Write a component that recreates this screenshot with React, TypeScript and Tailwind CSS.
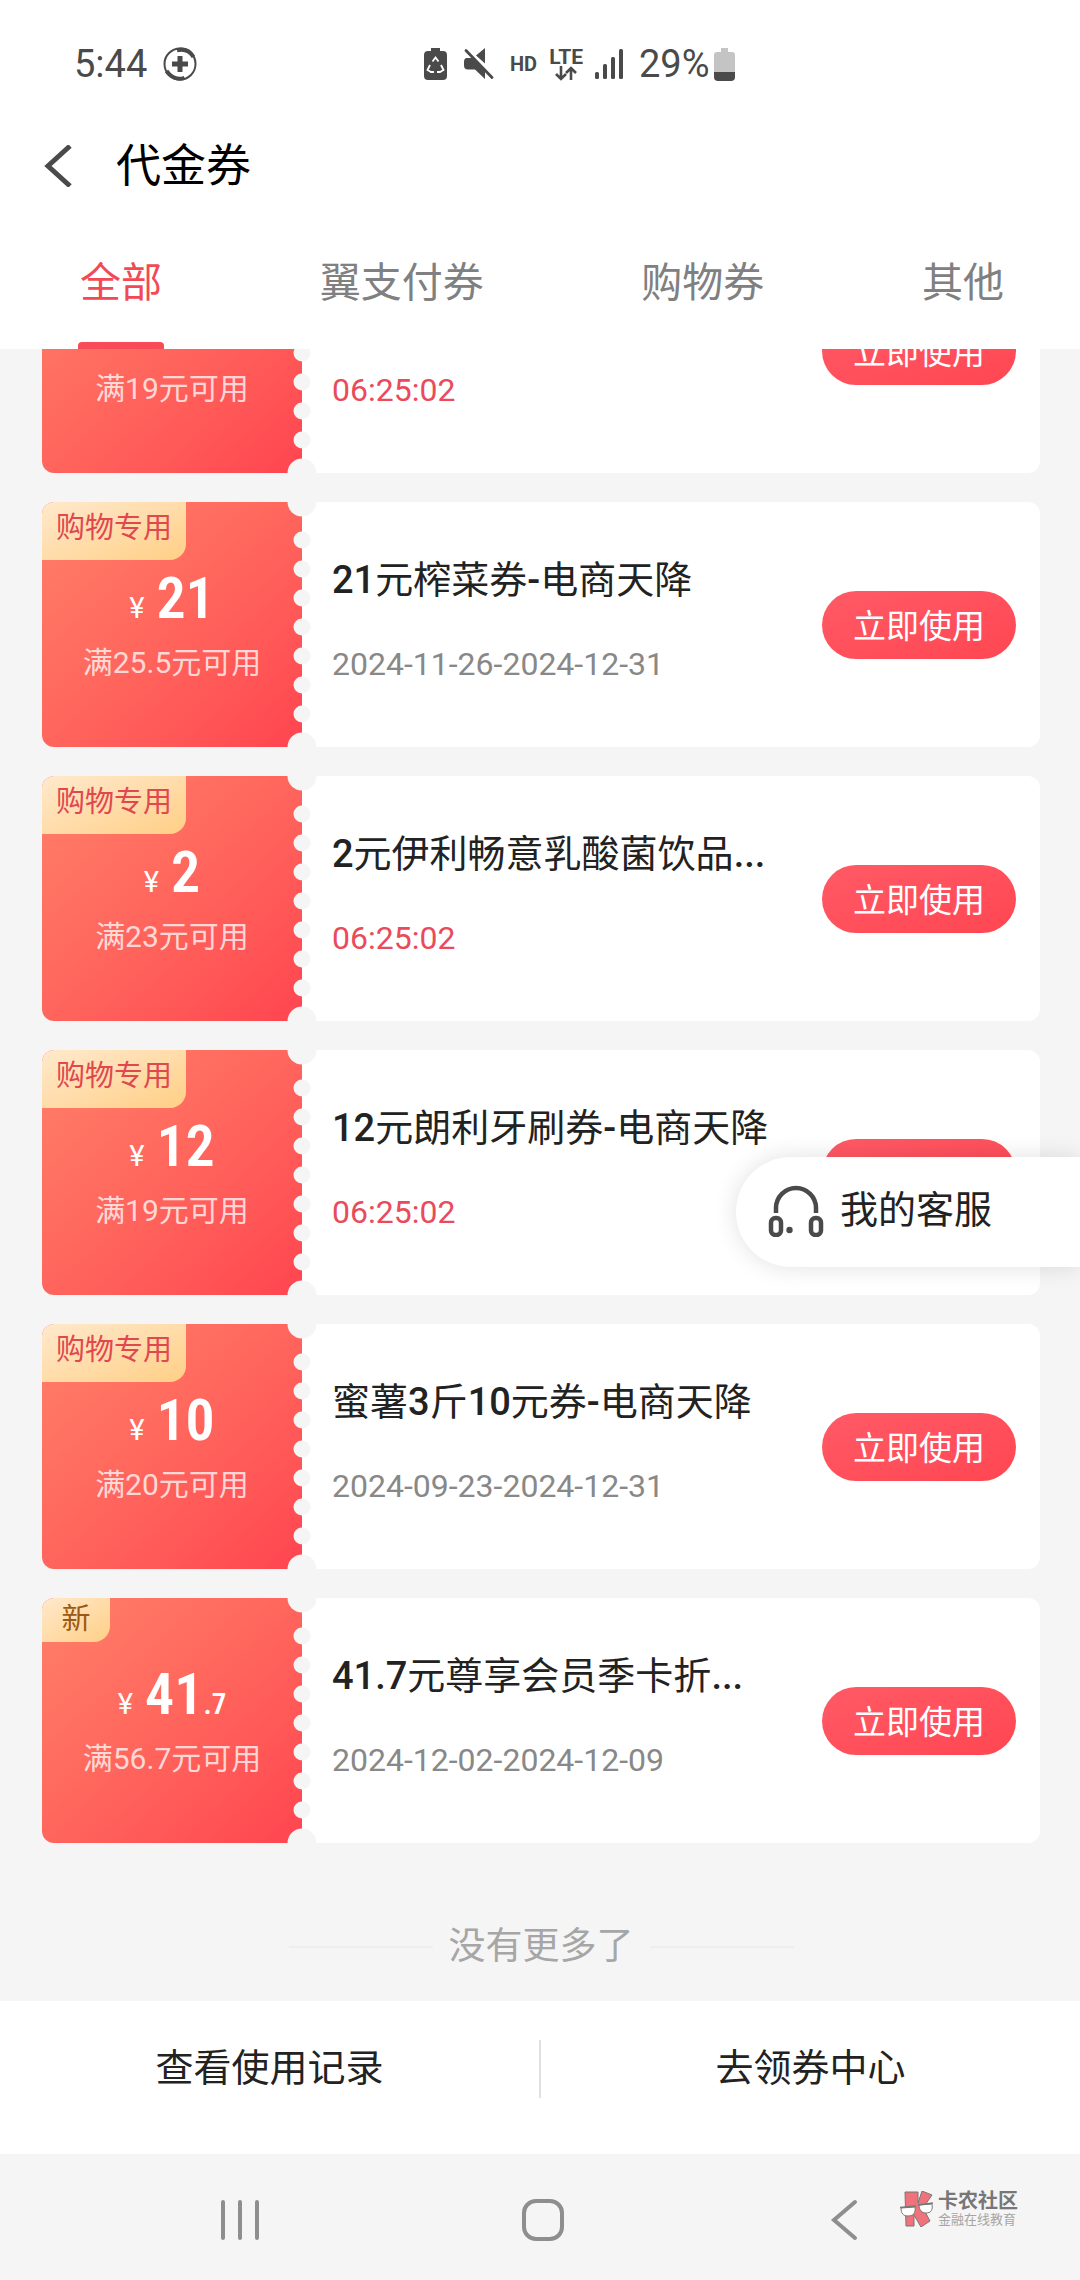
import { ReactNode } from 'react'

type Coupon = {
  badge?: 'shop' | 'new'
  amount?: string
  decimals?: string
  condition: string
  title?: string
  validity: string
  countdown?: boolean
}

const TABS = ['全部', '翼支付券', '购物券', '其他']

const COUPONS: Coupon[] = [
  // scrolled half out of view, only the lower part is rendered
  { condition: '满19元可用', validity: '06:25:02', countdown: true },
  { badge: 'shop', amount: '21', condition: '满25.5元可用', title: '21元榨菜券-电商天降', validity: '2024-11-26-2024-12-31' },
  { badge: 'shop', amount: '2', condition: '满23元可用', title: '2元伊利畅意乳酸菌饮品...', validity: '06:25:02', countdown: true },
  { badge: 'shop', amount: '12', condition: '满19元可用', title: '12元朗利牙刷券-电商天降', validity: '06:25:02', countdown: true },
  { badge: 'shop', amount: '10', condition: '满20元可用', title: '蜜薯3斤10元券-电商天降', validity: '2024-09-23-2024-12-31' },
  { badge: 'new', amount: '41', decimals: '.7', condition: '满56.7元可用', title: '41.7元尊享会员季卡折...', validity: '2024-12-02-2024-12-09' },
]

// y positions of the small holes along the tear line
const HOLES = [38, 67, 96, 125, 154, 183, 212]

function StatusBar() {
  return (
    <div className="flex h-[126px] items-center pt-0.5 pl-[74px] text-[38px] leading-none text-[#4a4a4a]">
      <div className="flex w-[350px] items-center gap-4">
        <span>5:44</span>
        <svg className="h-[34px] w-[34px]" viewBox="0 0 34 34" fill="none" stroke="currentColor">
          <circle cx="17" cy="17" r="15.5" strokeWidth="2" />
          <path d="M14 3.2C21 1.500 27 4 30.500 10M3.500 24c5 7 12 9 18 6.800" strokeWidth="4" />
          <path d="M17 9v16M9 17h16" strokeWidth="5" />
        </svg>
      </div>
      <div className="flex items-center">
        <svg className="h-8 w-[23px]" viewBox="0 0 23 32">
          <path d="M7 0h9v3h3a4 4 0 0 1 4 4v21a4 4 0 0 1-4 4H4a4 4 0 0 1-4-4V7a4 4 0 0 1 4-4h3z" fill="currentColor" />
          <path d="M8.500 13.500 11.500 9.500l3 4M17 17l2.500 5-3.500 2h-3M10 24H7l-3.500-2L6 17" fill="none" stroke="#fff" strokeWidth="1.800" />
        </svg>
        <svg className="ml-4 h-8 w-[31px]" viewBox="0 0 31 32">
          <path d="M13 7.500 22 0v15.500zM3 10h6l13 12.500V31L12 21.500H5a4 4 0 0 1-4-4v-4a3.500 3.500 0 0 1 2-3.500z" fill="currentColor" />
          <path d="m6 2.500 26 27" stroke="#fff" strokeWidth="2" />
          <path d="m3 2.500 26 27" stroke="currentColor" strokeWidth="2.800" strokeLinecap="round" />
        </svg>
        <span className="ml-4 text-xl font-bold">HD</span>
        <span className="ml-3 flex flex-col items-center">
          <span className="text-[21px] leading-[18px] font-bold">LTE</span>
          <svg className="h-[15px] w-6" viewBox="0 0 24 15" fill="none" stroke="currentColor" strokeWidth="2.600">
            <path d="M7 0v12M2 8l5 5 5-5M17 14V2M12 7l5-5 5 5" />
          </svg>
        </span>
        <svg className="ml-3 h-[30px] w-7" viewBox="0 0 28 30" fill="currentColor">
          <rect x="0" y="23" width="4" height="7" rx="1.500" />
          <rect x="8" y="15" width="4" height="15" rx="1.500" />
          <rect x="16" y="8" width="4" height="22" rx="1.500" />
          <rect x="24" y="0" width="4" height="30" rx="1.500" />
        </svg>
        <span className="ml-4">29%</span>
        <svg className="ml-1 h-[33px] w-[21px]" viewBox="0 0 21 33">
          <path d="M7 0h7v4h4a3 3 0 0 1 3 3v17H0V7a3 3 0 0 1 3-3h4z" fill="#c4c4c4" />
          <path d="M0 24h21v5a4 4 0 0 1-4 4H4a4 4 0 0 1-4-4z" fill="currentColor" />
        </svg>
      </div>
    </div>
  )
}

function Badge({ type }: { type: 'shop' | 'new' }) {
  if (type === 'new') {
    return (
      <span className="absolute top-0 left-0 flex h-11 w-[68px] justify-center rounded-tl-xl rounded-br-2xl bg-linear-to-br from-[#ffe9cc] to-[#ffcf85] text-[29px] leading-[42px] text-[#9a5a14]">
        新
      </span>
    )
  }
  return (
    <span className="absolute top-0 left-0 flex h-[58px] w-36 justify-center rounded-tl-xl rounded-br-2xl bg-linear-to-br from-[#ffe9cc] to-[#ffcf85] text-[29px] leading-[52px] text-[#e0474f]">
      购物专用
    </span>
  )
}

function TearLine() {
  return (
    <svg className="absolute top-0 left-[245px] h-[245px] w-[30px]" viewBox="0 0 30 245" fill="#f5f5f5" aria-hidden="true">
      <circle cx="15" cy="0" r="14.500" />
      {HOLES.map((y) => (
        <circle key={y} cx="15" cy={y} r="8.500" />
      ))}
      <circle cx="15" cy="245" r="14.500" />
    </svg>
  )
}

// Latin runs are medium weight, Chinese runs stay regular
function CouponTitle({ text }: { text: string }) {
  return (
    <>
      {text.split(/([\d.-]+)/).map((part, i) =>
        i % 2 === 1 ? (
          <span key={i} className="font-medium">
            {part}
          </span>
        ) : (
          part
        )
      )}
    </>
  )
}

function CouponCard({ coupon }: { coupon: Coupon }) {
  return (
    <li className="relative flex min-h-[245px] overflow-hidden rounded-xl bg-white">
      <div className="flex w-[260px] shrink-0 flex-col items-center bg-linear-to-br from-[#ff8069] to-[#ff4450] pt-[70px] text-white">
        {coupon.badge && <Badge type={coupon.badge} />}
        <p className="flex h-[52px] items-baseline leading-[52px]">
          {coupon.amount && (
            <>
              <span className="mr-3 text-[29px]">¥</span>
              <span className="font-['Roboto_Condensed','Roboto',sans-serif] text-[58px] font-semibold">{coupon.amount}</span>
            </>
          )}
          {coupon.decimals && (
            <span className="font-['Roboto_Condensed','Roboto',sans-serif] text-[29px] font-semibold">{coupon.decimals}</span>
          )}
        </p>
        <p className="mt-[19px] text-[30px] leading-10 text-white/75">{coupon.condition}</p>
      </div>
      <TearLine />
      <div className="min-w-0 flex-1 pt-[54px] pl-[30px]">
        <h2 className="h-12 text-[38px] leading-12 whitespace-nowrap text-[#222]">
          {coupon.title && <CouponTitle text={coupon.title} />}
        </h2>
        <p className={`mt-10 text-[32px] leading-10 ${coupon.countdown ? 'text-[#e94b5b]' : 'text-[#888]'}`}>
          {coupon.validity}
        </p>
      </div>
      <button
        type="button"
        className="mr-6 h-[68px] w-[194px] shrink-0 self-center rounded-full bg-linear-to-br from-[#ff5a66] to-[#ff4652] pt-1 text-[33px] text-white"
      >
        立即使用
      </button>
    </li>
  )
}

function ServiceButton() {
  return (
    <button
      type="button"
      className="absolute top-[808px] right-0 flex h-[110px] w-[344px] items-center gap-4 rounded-l-full bg-white pb-1 pl-8 text-[38px] text-[#222] shadow-[0_0_24px_rgba(0,0,0,0.12)]"
    >
      <svg className="h-[54px] w-[56px]" viewBox="0 0 56 54" fill="none" stroke="#4a4a4a" strokeWidth="4.500">
        <path d="M8 30V25a20 20 0 0 1 40 0v5" />
        <rect x="3" y="35" width="10" height="17" rx="4.500" />
        <rect x="43" y="35" width="10" height="17" rx="4.500" />
        <circle cx="21.500" cy="47" r="3.200" fill="#4a4a4a" stroke="none" />
      </svg>
      我的客服
    </button>
  )
}

function NavButton({ label, children }: { label: string; children: ReactNode }) {
  return (
    <button type="button" aria-label={label} className="text-[#8e8e8e]">
      <svg className="h-11 w-11" viewBox="0 0 44 44" fill="none" stroke="currentColor" strokeWidth="4" strokeLinecap="round">
        {children}
      </svg>
    </button>
  )
}

function Watermark() {
  return (
    <div className="absolute top-9 right-[62px] flex items-center gap-1">
      <svg className="h-9 w-[34px]" viewBox="0 0 34 36" stroke="#777" strokeWidth="1">
        <path d="M5 1h13v11l4-12 10 4-9 13 7 13-9 6-7-12v11H6z" fill="#f0737b" />
        <path d="M1 17l14-1c1 6-2 9-7 9s-7-3-7-8zM19 14l13-1c1 6-1 9-6 9-4 0-7-3-7-8z" fill="#fff" />
        <path d="M0 16.500l16-1.500M18 14l15-2" fill="none" strokeWidth="1.500" />
      </svg>
      <div>
        <p className="text-xl leading-[22px] font-bold text-[#777]">卡农社区</p>
        <p className="text-[13px] leading-4 text-[#a5a5a5]">金融在线教育</p>
      </div>
    </div>
  )
}

export default function App() {
  return (
    <div className="min-h-screen bg-[#f5f5f5] font-['Roboto','Noto_Sans_CJK_SC',sans-serif]">
      <header className="bg-white">
        <StatusBar />
        <div className="flex h-20 items-center gap-[44px] pl-11">
          <button type="button" aria-label="返回">
            <svg className="h-[42px] w-7" viewBox="0 0 28 42" fill="none" stroke="#4a4a4a" strokeWidth="5">
              <path d="M26 1 4 21l22 20" />
            </svg>
          </button>
          <h1 className="text-[45px] leading-none text-black">代金券</h1>
        </div>
        <nav className="flex h-[143px] justify-between pr-[76px] pl-20">
          {TABS.map((tab, i) => (
            <button
              key={tab}
              type="button"
              className={`relative pt-3 text-[41px] ${i === 0 ? 'text-[#f24957]' : 'text-[#808080]'}`}
            >
              {tab}
              {i === 0 && <span className="absolute -inset-x-0.5 bottom-0 h-[7px] rounded-t-sm bg-[#f84a57]" />}
            </button>
          ))}
        </nav>
      </header>

      <main className="relative">
        <div className="overflow-hidden pr-10 pl-[42px]">
          {/* list is scrolled half a card down */}
          <ul className="-mt-[121px] flex flex-col gap-[29px]">
            {COUPONS.map((coupon, i) => (
              <CouponCard key={i} coupon={coupon} />
            ))}
          </ul>
          <div className="flex items-center justify-center gap-4 pt-[77px] pb-[27px] text-[37px] leading-[54px] text-[#a6a6a6]">
            <span className="h-0.5 w-36 bg-[#eee]" />
            没有更多了
            <span className="h-0.5 w-36 bg-[#eee]" />
          </div>
        </div>
        <ServiceButton />
      </main>

      <div className="flex h-[153px] bg-white pb-[18px] text-[38px] text-[#222]">
        <a href="#records" className="flex flex-1 items-center justify-center">查看使用记录</a>
        <span className="h-[58px] w-0.5 self-center bg-[#e0e0e0]" />
        <a href="#center" className="flex flex-1 items-center justify-center">去领券中心</a>
      </div>

      <footer className="relative flex h-[126px] items-center justify-between bg-[#f5f5f5] pt-1.5 pr-[212px] pl-[218px]">
        <NavButton label="最近任务">
          <path d="M5 4v36M22 4v36M39 4v36" />
        </NavButton>
        <NavButton label="主屏幕">
          <rect x="3" y="3" width="38" height="38" rx="12" />
        </NavButton>
        <NavButton label="后退">
          <path d="M31 4 10 22l21 18" />
        </NavButton>
        <Watermark />
      </footer>
    </div>
  )
}
